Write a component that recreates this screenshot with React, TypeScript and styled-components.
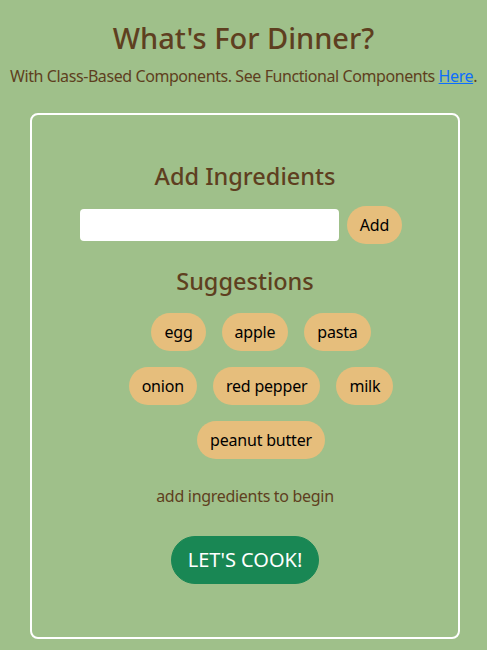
import React from "react";
import styled, { createGlobalStyle } from "styled-components";

const Global = createGlobalStyle`
  html, body { margin: 0; padding: 0; background: #9fc08a; }
  body { font-family: "Noto Sans", "Open Sans", sans-serif; color: #5e3f20; }
  * { box-sizing: border-box; }
`;

const Page = styled.div`
  display: flex;
  flex-direction: column;
  align-items: center;
  padding: 20px 0 13px;
`;

const Title = styled.h1`
  margin: 0 0 9px;
  font-size: 29px;
  line-height: 35px;
  font-weight: 500;
  color: #5e3f20;
`;

const Subtitle = styled.p`
  margin: 0;
  font-size: 16px;
  line-height: 24px;
  letter-spacing: -0.42px;
  white-space: nowrap;
`;

const Link = styled.a`
  color: #0d6efd;
  text-decoration: underline;
`;

const Card = styled.section`
  margin-top: 25px;
  align-self: flex-start;
  margin-left: 30px;
  width: 430px;
  border: 2px solid #ffffff;
  border-radius: 8px;
  padding: 47px 0 53px;
  display: flex;
  flex-direction: column;
  align-items: center;
`;

const Heading = styled.h3`
  margin: 0;
  font-size: 23.5px;
  line-height: 28px;
  font-weight: 500;
  color: #5e3f20;
`;

const AddRow = styled.div`
  display: flex;
  align-items: center;
  gap: 8px;
  margin: 16px 8px 23px 0;
`;

const Input = styled.input`
  width: 259px;
  height: 32px;
  border: none;
  border-radius: 4px;
  background: #ffffff;
  outline: none;
`;

const Pill = styled.button`
  font-family: inherit;
  font-size: 16px;
  line-height: 24px;
  letter-spacing: -0.2px;
  padding: 6px 12px;
  border: 1px solid transparent;
  border-radius: 19px;
  background: #e6be7c;
  color: #000;
  cursor: pointer;
`;

const Chips = styled.ul`
  list-style: none;
  margin: 10px 0 17px;
  padding: 0 0 0 32px;
  width: 330px;
  display: flex;
  flex-wrap: wrap;
  justify-content: center;
`;

const ChipItem = styled.li`
  margin: 8px;
`;

const Hint = styled.p`
  margin: 0 0 28px;
  font-size: 16px;
  line-height: 24px;
  letter-spacing: -0.3px;
`;

const CookButton = styled.button`
  font-family: inherit;
  font-size: 20px;
  line-height: 30px;
  padding: 8px 16px;
  border: 1px solid #198754;
  border-radius: 24px;
  background: #198754;
  color: #fff;
  cursor: pointer;
`;

const suggestions = ["egg", "apple", "pasta", "onion", "red pepper", "milk", "peanut butter"];

export default function App() {
  return (
    <>
      <Global />
      <Page>
        <Title>What's For Dinner?</Title>
        <Subtitle>
          With Class-Based Components. See Functional Components <Link href="#">Here</Link>.
        </Subtitle>
        <Card>
          <Heading>Add Ingredients</Heading>
          <AddRow>
            <Input type="text" />
            <Pill>Add</Pill>
          </AddRow>
          <Heading>Suggestions</Heading>
          <Chips>
            {suggestions.map((s) => (
              <ChipItem key={s}>
                <Pill>{s}</Pill>
              </ChipItem>
            ))}
          </Chips>
          <Hint>add ingredients to begin</Hint>
          <CookButton>LET'S COOK!</CookButton>
        </Card>
      </Page>
    </>
  );
}
